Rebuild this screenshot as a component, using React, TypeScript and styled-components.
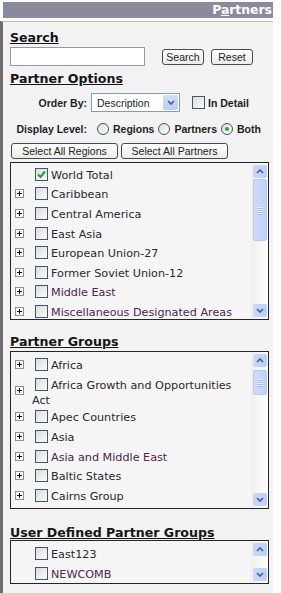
import React from 'react';
import styled, { createGlobalStyle } from 'styled-components';

const GlobalStyle = createGlobalStyle`
  html, body {
    margin: 0;
    padding: 0;
    background: #fbfbfb;
  }
  body {
    font-family: 'DejaVu Sans', Verdana, sans-serif;
  }
`;

const UI_FONT = `'Liberation Sans', Arial, sans-serif`;
const LIST_FONT = `'DejaVu Sans', Verdana, sans-serif`;

/* Frame */
const Page = styled.div`
  width: 273px;
  height: 593px;
  padding-top: 2px;
  box-sizing: border-box;
  display: flex;
  flex-direction: column;
  overflow: hidden;
`;

const TitleBar = styled.div`
  margin-left: 3px;
  height: 16px;
  flex: none;
  padding-right: 1px;
  background: #8a8a9e;
  color: #fff;
  font: bold 12.4px/16px ${LIST_FONT};
  text-align: right;
`;

const Panel = styled.div`
  flex: 1;
  margin-top: 3px;
  padding: 8px 4px 0 7px;
  background: #f2f2f2;
  border-top: 1px solid #bdbdae;
  border-left: 3px solid #6e6e6e;
`;

const SectionTitle = styled.h2<{ $gap?: number }>`
  margin: ${({ $gap = 0 }) => $gap}px 0 0 0;
  font: bold 12.6px/15px ${LIST_FONT};
  color: #151515;
  text-decoration: underline;
  white-space: nowrap;
`;

/* Search */
const SearchRow = styled.div`
  margin-top: 2px;
  display: flex;
  align-items: flex-end;
`;

const SearchInput = styled.input`
  width: 135px;
  height: 19px;
  box-sizing: border-box;
  margin: 0;
  border: 1px solid #8a9bb2;
  background: #fff;
`;

const Button = styled.button<{ $width: number; $gap?: number }>`
  width: ${({ $width }) => $width}px;
  height: 16px;
  margin: 0 0 1px ${({ $gap = 0 }) => $gap}px;
  padding: 0;
  border: 1px solid #3f4c5f;
  border-radius: 3px;
  background: linear-gradient(#fefefd, #ecebe5);
  color: #222;
  font: 10.5px/14px ${UI_FONT};
  white-space: nowrap;
`;

/* Options */
const OptionRow = styled.div<{ $gap: number }>`
  margin-top: ${({ $gap }) => $gap}px;
  display: flex;
  align-items: center;
`;

const OptionLabel = styled.span`
  width: 77px;
  flex: none;
  text-align: right;
  font: bold 10.5px ${UI_FONT};
  color: #1e1e1e;
  white-space: nowrap;
`;

const InlineLabel = styled.span<{ $gap?: number }>`
  margin-left: ${({ $gap = 0 }) => $gap}px;
  font: bold 10.5px ${UI_FONT};
  color: #1e1e1e;
  white-space: nowrap;
`;

const SelectBox = styled.div`
  margin-left: 4px;
  width: 89px;
  height: 19px;
  box-sizing: border-box;
  border: 1px solid #7f9db9;
  background: #fff;
  display: flex;
  align-items: center;
  justify-content: space-between;
  padding: 1px 1px 1px 5px;
  font: 10.5px ${UI_FONT};
  color: #1e1e1e;
`;

const SelectArrow = styled.span`
  width: 15px;
  height: 15px;
  border-radius: 2px;
  background: linear-gradient(#d2defc, #b9cdf9);
  display: flex;
  align-items: center;
  justify-content: center;
`;

const Box = styled.span<{ $gap?: number }>`
  display: inline-block;
  flex: none;
  width: 13px;
  height: 13px;
  box-sizing: border-box;
  margin-left: ${({ $gap = 0 }) => $gap}px;
  border: 1px solid #3b5676;
  background: linear-gradient(135deg, #dcdcd6, #fbfbfa);
  & > svg {
    display: block;
    margin: 1px;
  }
`;

const Radio = styled.span<{ $gap?: number }>`
  display: inline-flex;
  align-items: center;
  justify-content: center;
  flex: none;
  width: 12px;
  height: 12px;
  box-sizing: border-box;
  margin-left: ${({ $gap = 0 }) => $gap}px;
  border: 1px solid #3b5676;
  border-radius: 50%;
  background: linear-gradient(135deg, #dcdcd6, #fdfdfc);
`;

const RadioDot = styled.span`
  width: 4px;
  height: 4px;
  border-radius: 50%;
  background: #30a830;
`;

const ButtonRow = styled.div`
  margin: 8px 0 0 1px;
  display: flex;
  gap: 3px;
`;

/* Lists */
const ListBox = styled.div<{ $height: number; $gap: number }>`
  margin-top: ${({ $gap }) => $gap}px;
  width: 259px;
  height: ${({ $height }) => $height}px;
  box-sizing: border-box;
  border: 1px solid #262626;
  background: #f5f5f5;
  display: flex;
  overflow: hidden;
`;

const ListBody = styled.div<{ $offset: number }>`
  flex: 1;
  overflow: hidden;
  padding-top: ${({ $offset }) => $offset}px;
`;

const Row = styled.div`
  display: flex;
  align-items: center;
  min-height: 19.6px;
`;

const ExpanderCell = styled.div`
  width: 21px;
  flex: none;
  box-sizing: border-box;
  padding-left: 4px;
  display: flex;
`;

const Plus = styled.span`
  width: 9px;
  height: 9px;
  box-sizing: border-box;
  border: 1px solid #8d8d8d;
  background: #fff;
  position: relative;
  &::before,
  &::after {
    content: '';
    position: absolute;
    background: #111;
  }
  &::before {
    left: 1px;
    top: 3px;
    width: 5px;
    height: 1px;
  }
  &::after {
    left: 3px;
    top: 1px;
    width: 1px;
    height: 5px;
  }
`;

const ItemCell = styled.div<{ $visited?: boolean }>`
  flex: 1;
  font: 11.2px/13.6px ${LIST_FONT};
  color: ${({ $visited }) => ($visited ? '#4e2450' : '#2c2630')};
  & > ${Box} {
    margin: 3px;
    vertical-align: -5.5px;
  }
`;

const ScrollTrack = styled.div`
  width: 17px;
  flex: none;
  box-sizing: border-box;
  padding: 2px 1px 2px 2px;
  display: flex;
  flex-direction: column;
  background: linear-gradient(to right, #efefeb, #fdfdfc);
`;

const ScrollButton = styled.div`
  height: 13px;
  flex: none;
  border-radius: 2px;
  background: linear-gradient(to right, #c9d8fb, #bccff9);
  display: flex;
  align-items: center;
  justify-content: center;
`;

const ScrollThumb = styled.div<{ $top: number; $height: number }>`
  margin-top: ${({ $top }) => $top}px;
  height: ${({ $height }) => $height}px;
  flex: none;
  box-sizing: border-box;
  border: 1px solid #b7c9f3;
  border-radius: 2px;
  background: linear-gradient(to right, #cddbfb, #c0d2fa);
  display: flex;
  flex-direction: column;
  align-items: center;
  justify-content: center;
  gap: 1px;
`;

const Grip = styled.span`
  width: 6px;
  height: 1px;
  background: #e9effd;
  box-shadow: 0 1px 0 #a9bdeb;
`;

const Spacer = styled.div`
  flex: 1;
`;

const Chevron = ({ up }: { up?: boolean }) => (
  <svg width='8' height='5' viewBox='0 0 8 5'>
    <polyline
      points={up ? '1,4 4,1 7,4' : '1,1 4,4 7,1'}
      fill='none'
      stroke='#4a5f86'
      strokeWidth='1.7'
    />
  </svg>
);

const CheckMark = () => (
  <svg width='9' height='9' viewBox='0 0 9 9'>
    <polyline points='1,4.5 3.5,7 8,1.5' fill='none' stroke='#22a022' strokeWidth='2' />
  </svg>
);

type Item = { label: string; expandable?: boolean; checked?: boolean; visited?: boolean };

type ScrollProps = { thumb?: { top: number; height: number } };

const Scrollbar = ({ thumb }: ScrollProps) => (
  <ScrollTrack>
    <ScrollButton>
      <Chevron up />
    </ScrollButton>
    {thumb && (
      <ScrollThumb $top={thumb.top} $height={thumb.height}>
        <Grip />
        <Grip />
        <Grip />
        <Grip />
      </ScrollThumb>
    )}
    <Spacer />
    <ScrollButton>
      <Chevron />
    </ScrollButton>
  </ScrollTrack>
);

type ListProps = {
  items: Item[];
  height: number;
  gap: number;
  offset: number;
  thumb?: { top: number; height: number };
};

const CheckList = ({ items, height, gap, offset, thumb }: ListProps) => (
  <ListBox $height={height} $gap={gap}>
    <ListBody $offset={offset}>
      {items.map((item, i) => (
        <Row key={i}>
          <ExpanderCell>{item.expandable && <Plus />}</ExpanderCell>
          <ItemCell $visited={item.visited}>
            <Box>{item.checked && <CheckMark />}</Box>
            {item.label}
          </ItemCell>
        </Row>
      ))}
    </ListBody>
    <Scrollbar thumb={thumb} />
  </ListBox>
);

const regions: Item[] = [
  { label: 'World Total', checked: true },
  { label: 'Caribbean', expandable: true },
  { label: 'Central America', expandable: true },
  { label: 'East Asia', expandable: true },
  { label: 'European Union-27', expandable: true },
  { label: 'Former Soviet Union-12', expandable: true },
  { label: 'Middle East', expandable: true, visited: true },
  { label: 'Miscellaneous Designated Areas', expandable: true, visited: true },
];

const partnerGroups: Item[] = [
  { label: 'Africa', expandable: true },
  { label: 'Africa Growth and Opportunities Act', expandable: true },
  { label: 'Apec Countries', expandable: true },
  { label: 'Asia', expandable: true },
  { label: 'Asia and Middle East', expandable: true, visited: true },
  { label: 'Baltic States', expandable: true },
  { label: 'Cairns Group', expandable: true },
  { label: '', expandable: true },
];

const userGroups: Item[] = [
  { label: 'East123' },
  { label: 'NEWCOMB', visited: true },
];

export default function App() {
  return (
    <>
      <GlobalStyle />
      <Page>
        <TitleBar>
          P<u>a</u>rtners
        </TitleBar>
        <Panel>
          <SectionTitle>Search</SectionTitle>
          <SearchRow>
            <SearchInput type='text' />
            <Button $width={42} $gap={17}>
              Search
            </Button>
            <Button $width={42} $gap={7}>
              Reset
            </Button>
          </SearchRow>

          <SectionTitle $gap={4.5}>Partner Options</SectionTitle>
          <OptionRow $gap={7.5}>
            <OptionLabel>Order By:</OptionLabel>
            <SelectBox>
              Description
              <SelectArrow>
                <Chevron />
              </SelectArrow>
            </SelectBox>
            <Box $gap={12} />
            <InlineLabel $gap={3}>In Detail</InlineLabel>
          </OptionRow>
          <OptionRow $gap={11}>
            <OptionLabel>Display Level:</OptionLabel>
            <Radio $gap={10} />
            <InlineLabel $gap={4}>Regions</InlineLabel>
            <Radio $gap={4} />
            <InlineLabel $gap={4}>Partners</InlineLabel>
            <Radio $gap={4}>
              <RadioDot />
            </Radio>
            <InlineLabel $gap={4}>Both</InlineLabel>
          </OptionRow>
          <ButtonRow>
            <Button $width={107}>Select All Regions</Button>
            <Button $width={107}>Select All Partners</Button>
          </ButtonRow>
          <CheckList items={regions} height={158} gap={2} offset={1.5} thumb={{ top: 1, height: 62 }} />

          <SectionTitle $gap={14}>Partner Groups</SectionTitle>
          <CheckList items={partnerGroups} height={158} gap={2} offset={3} thumb={{ top: 3, height: 25 }} />

          <SectionTitle $gap={16}>User Defined Partner Groups</SectionTitle>
          <CheckList items={userGroups} height={44} gap={0} offset={3} />
        </Panel>
      </Page>
    </>
  );
}
